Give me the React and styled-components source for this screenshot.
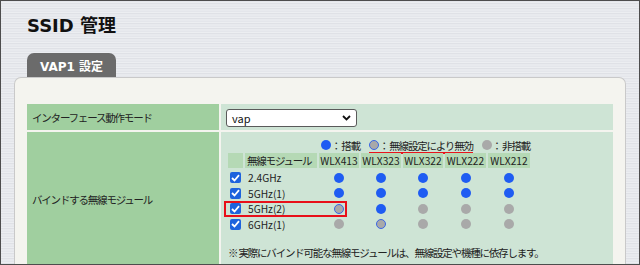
import styled, { createGlobalStyle } from "styled-components";

const GlobalStyle = createGlobalStyle`
  html, body { margin: 0; padding: 0; }
  body { font-family: "Noto Sans CJK JP", "Noto Sans", sans-serif; color: #222; }
`;

const JP = `"Noto Sans CJK JP", "Noto Sans", sans-serif`;

const modules = ["WLX413", "WLX323", "WLX322", "WLX222", "WLX212"];

// on = blue, off = gray, dis = gray with blue ring
const bands = [
  { name: "2.4GHz", dots: ["on", "on", "on", "on", "on"] },
  { name: "5GHz(1)", dots: ["on", "on", "on", "on", "on"] },
  { name: "5GHz(2)", dots: ["dis", "on", "off", "off", "off"], marked: true },
  { name: "6GHz(1)", dots: ["off", "dis", "off", "off", "off"] },
];

const App = () => {
  return (
    <>
      <GlobalStyle />
      <Frame>
        <Title>SSID 管理</Title>
        <Tab>VAP1 設定</Tab>
        <Panel>
          <SettingsGrid>
            <LabelCell>インターフェース動作モード</LabelCell>
            <ValueCell>
              <SelectBox>
                <span>vap</span>
                <svg width="9" height="6" viewBox="0 0 9 6">
                  <path d="M1 1 L4.5 4.5 L8 1" fill="none" stroke="#111" strokeWidth="1.8" />
                </svg>
              </SelectBox>
            </ValueCell>

            <LabelCell>バインドする無線モジュール</LabelCell>
            <ValueCell $pad="7px 7px 6px">
              <ModuleBlock>
                <Legend>
                  <LegendItem>
                    <Dot $state="on" />
                    <Colon>：</Colon>搭載
                  </LegendItem>
                  <LegendItem $underline>
                    <Dot $state="dis" />
                    <Colon>：</Colon>無線設定により無効
                  </LegendItem>
                  <LegendItem>
                    <Dot $state="off" />
                    <Colon>：</Colon>非搭載
                  </LegendItem>
                </Legend>
                <ModuleRow $head>
                  <HeadCell />
                  <HeadCell $left>無線モジュール</HeadCell>
                  {modules.map((m) => (
                    <HeadCell key={m}>{m}</HeadCell>
                  ))}
                </ModuleRow>
                {bands.map((b) => (
                  <ModuleRow key={b.name}>
                    {b.marked && <RedBox />}
                    <BodyCell>
                      <Check>
                        <svg width="9" height="8" viewBox="0 0 9 8">
                          <path d="M1 4 L3.5 6.5 L8 1.2" fill="none" stroke="#fff" strokeWidth="1.8" />
                        </svg>
                      </Check>
                    </BodyCell>
                    <BodyCell $left>{b.name}</BodyCell>
                    {b.dots.map((d, i) => (
                      <BodyCell key={i}>
                        <Dot $state={d} />
                      </BodyCell>
                    ))}
                  </ModuleRow>
                ))}
                <Note>※ 実際にバインド可能な無線モジュールは、無線設定や機種に依存します。</Note>
              </ModuleBlock>
            </ValueCell>
          </SettingsGrid>
        </Panel>
      </Frame>
    </>
  );
};

export default App;

const Frame = styled.div`
  width: 640px;
  height: 265px;
  box-sizing: border-box;
  border: 1px solid #4d4d4d;
  overflow: hidden;
  padding: 13px 0 0 13px;
  background: repeating-linear-gradient(
    180deg,
    #e4e6eb 0px,
    #e4e6eb 1px,
    #eceef1 1px,
    #eceef1 2px,
    #dfe1e6 2px,
    #dfe1e6 3px,
    #e8eaee 3px,
    #e8eaee 5px
  );
`;

const Title = styled.h1`
  margin: 0 0 0 13px;
  height: 24px;
  line-height: 24px;
  font-family: "DejaVu Sans", ${JP};
  font-size: 18px;
  font-weight: bold;
  color: #111;
`;

const Tab = styled.div`
  margin: 15px 0 0 13px;
  width: 89px;
  height: 24px;
  background: #6b6b6b;
  border-radius: 7px 7px 0 0;
  color: #fff;
  font-family: "DejaVu Sans", ${JP};
  font-weight: bold;
  font-size: 12px;
  display: flex;
  align-items: center;
  justify-content: center;
`;

const Panel = styled.div`
  width: 612px;
  height: 200px;
  box-sizing: border-box;
  background: #f4f4ef;
  border: 1px solid #c9c9c9;
  border-bottom: none;
  border-radius: 7px 7px 0 0;
  padding: 26px 0 0 12px;
`;

const SettingsGrid = styled.div`
  display: grid;
  grid-template-columns: 192px 392px;
  grid-template-rows: 26px auto;
  gap: 2px;
`;

const LabelCell = styled.div`
  background: #a0cf9f;
  display: flex;
  align-items: center;
  padding-left: 5px;
  font-size: 10.5px;
  letter-spacing: -1.2px;
  color: #222;
`;

const ValueCell = styled.div`
  background: #cee4d5;
  padding: ${(p) => p.$pad || "5px"};
`;

const SelectBox = styled.div`
  width: 131px;
  height: 18px;
  box-sizing: border-box;
  background: #fff;
  border: 1px solid #5a5a5a;
  border-radius: 3px;
  display: flex;
  align-items: center;
  justify-content: space-between;
  padding: 0 5px 0 5px;
  font-size: 11px;
  color: #111;
`;

const ModuleBlock = styled.div`
  display: flex;
  flex-direction: column;
  width: 302px;
`;

const Legend = styled.div`
  display: flex;
  justify-content: flex-end;
  gap: 9px;
  height: 14px;
  font-size: 10.5px;
  letter-spacing: -1.2px;
`;

const LegendItem = styled.span`
  display: inline-flex;
  align-items: center;
  height: 12px;
  padding-bottom: 1px;
  white-space: nowrap;
  border-bottom: 2px solid ${(p) => (p.$underline ? "#e8141c" : "transparent")};
`;

const Colon = styled.span`
  margin: 0 1px 0 0;
`;

const ModuleRow = styled.div`
  position: relative;
  display: grid;
  grid-template-columns: 15px 72px 40px 40px 40px 41px 42px;
  column-gap: 2px;
  height: ${(p) => (p.$head ? "15px" : "15.5px")};
  margin: ${(p) => (p.$head ? "0 0 2px" : "0")};
`;

const HeadCell = styled.div`
  background: #b5d9b5;
  display: flex;
  align-items: center;
  justify-content: ${(p) => (p.$left ? "flex-start" : "center")};
  padding-left: ${(p) => (p.$left ? "2px" : "0")};
  font-size: ${(p) => (p.$left ? "10.5px" : "10.2px")};
  letter-spacing: ${(p) => (p.$left ? "-1.2px" : "0")};
  color: #222;
`;

const BodyCell = styled.div`
  display: flex;
  align-items: center;
  justify-content: ${(p) => (p.$left ? "flex-start" : "center")};
  padding-left: ${(p) => (p.$left ? "3px" : "0")};
  font-size: 10.2px;
  color: #222;
`;

const Check = styled.span`
  width: 11px;
  height: 11px;
  border-radius: 2px;
  background: #1d63dd;
  display: flex;
  align-items: center;
  justify-content: center;
`;

const Dot = styled.span`
  display: inline-block;
  width: 10px;
  height: 10px;
  box-sizing: border-box;
  border-radius: 50%;
  flex-shrink: 0;
  background: ${(p) => (p.$state === "on" ? "#1f5cf2" : "#a9a9a9")};
  border: ${(p) => (p.$state === "dis" ? "1.5px solid #3a66e6" : "none")};
`;

const RedBox = styled.div`
  position: absolute;
  left: -4px;
  top: 0;
  width: 123px;
  height: 16px;
  box-sizing: border-box;
  border: 2px solid #e8101a;
  pointer-events: none;
`;

const Note = styled.div`
  margin-top: 13px;
  font-size: 10.5px;
  letter-spacing: -1.2px;
  white-space: nowrap;
  color: #222;
`;
